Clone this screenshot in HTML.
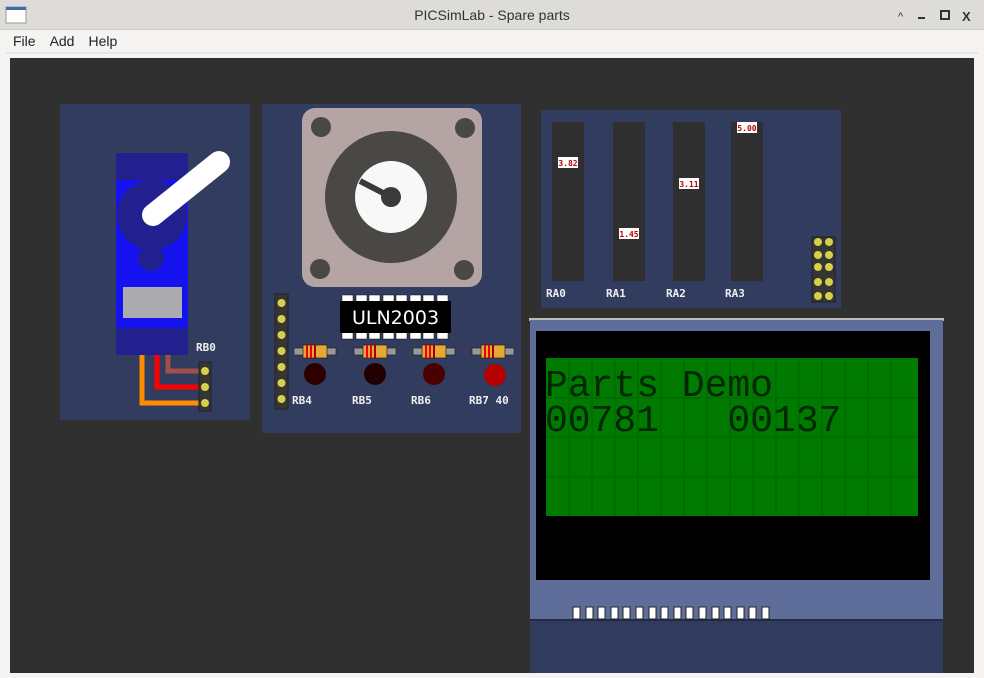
<!DOCTYPE html>
<html><head><meta charset="utf-8"><style>
body{margin:0;width:984px;height:678px;overflow:hidden;background:#f5f4f2;font-family:"Liberation Sans","DejaVu Sans",sans-serif;position:relative}
.title{position:absolute;left:0;top:0;width:984px;height:29px;background:#dedcd8;border-bottom:1px solid #d0cec9}
.title .t{position:absolute;left:0;width:984px;top:7px;text-align:center;font-size:14px;color:#333}
.menu{position:absolute;top:33px;left:13px;font-size:14px;color:#222}
.menu span{margin-right:14px}
svg{position:absolute;left:0;top:0}
svg text{white-space:pre}
</style></head><body>
<div class="title"><div class="t">PICSimLab - Spare parts</div></div>
<div class="menu"><span>File</span><span>Add</span><span>Help</span></div>
<svg width="984" height="678" viewBox="0 0 984 678" font-family="DejaVu Sans Mono, Liberation Mono, monospace">
<rect x="6" y="7" width="20" height="16" fill="#fff" stroke="#999"/><rect x="6" y="7" width="20" height="3" fill="#3a6ab0"/>
<text x="898" y="20" font-size="11" fill="#333" font-family="Liberation Sans">^</text>
<rect x="918" y="17" width="7" height="2" fill="#333"/>
<rect x="941" y="11" width="8" height="8" fill="none" stroke="#333" stroke-width="2"/>
<text x="962" y="21" font-size="13" font-weight="bold" fill="#333" font-family="Liberation Sans">X</text>
<line x1="6" y1="53" x2="978" y2="53" stroke="#dcdad6"/>
<rect x="10" y="58" width="964" height="615" fill="#303030"/>
<rect x="60" y="104" width="190" height="316" fill="#313c5f"/>
<rect x="116" y="153" width="72" height="202" fill="#22208f"/>
<rect x="116" y="180" width="72" height="148" fill="#1412ee"/>
<circle cx="152" cy="215" r="35" fill="#22208f"/>
<circle cx="151" cy="258" r="13" fill="#22208f"/>
<rect x="123" y="287" width="59" height="31" fill="#acabb0"/>
<line x1="153" y1="215" x2="219" y2="162" stroke="#fff" stroke-width="22" stroke-linecap="round"/>
<polyline points="142,355 142,403 199,403" fill="none" stroke="#ff8c00" stroke-width="5"/>
<polyline points="157,355 157,387 199,387" fill="none" stroke="#ff0000" stroke-width="5"/>
<polyline points="168,355 168,371 199,371" fill="none" stroke="#a0504a" stroke-width="5"/>
<rect x="199" y="362" width="12" height="49" fill="#353535" stroke="#222"/>
<circle cx="205" cy="371" r="4" fill="#d6d04a"/><circle cx="205" cy="387" r="4" fill="#d6d04a"/><circle cx="205" cy="403" r="4" fill="#d6d04a"/>
<text x="196" y="351" font-size="11" font-weight="bold" fill="#eee">RB0</text>
<rect x="262" y="104" width="259" height="329" fill="#313c5f"/>
<rect x="302" y="108" width="180" height="179" rx="13" fill="#b4a4a3"/>
<circle cx="321" cy="127" r="10" fill="#4a4845"/><circle cx="465" cy="128" r="10" fill="#4a4845"/>
<circle cx="320" cy="269" r="10" fill="#4a4845"/><circle cx="464" cy="270" r="10" fill="#4a4845"/>
<circle cx="391" cy="197" r="66" fill="#4a4845"/>
<circle cx="391" cy="197" r="36" fill="#f8f8f8"/>
<line x1="360" y1="181" x2="391" y2="197" stroke="#3a3a3a" stroke-width="6"/>
<circle cx="391" cy="197" r="10" fill="#3a3a3a"/>
<g fill="#fff" stroke="#111" stroke-width="0.5">
<rect x="342" y="295" width="11" height="7"/><rect x="356" y="295" width="11" height="7"/><rect x="369" y="295" width="11" height="7"/><rect x="383" y="295" width="11" height="7"/><rect x="396" y="295" width="11" height="7"/><rect x="410" y="295" width="11" height="7"/><rect x="423" y="295" width="11" height="7"/><rect x="437" y="295" width="11" height="7"/>
<rect x="342" y="332" width="11" height="7"/><rect x="356" y="332" width="11" height="7"/><rect x="369" y="332" width="11" height="7"/><rect x="383" y="332" width="11" height="7"/><rect x="396" y="332" width="11" height="7"/><rect x="410" y="332" width="11" height="7"/><rect x="423" y="332" width="11" height="7"/><rect x="437" y="332" width="11" height="7"/>
</g>
<rect x="340" y="301" width="111" height="32" fill="#000"/>
<text x="395.5" y="324" font-size="19" fill="#fff" text-anchor="middle" font-family="DejaVu Sans, Liberation Sans">ULN2003</text>
<rect x="275" y="294" width="13" height="115" fill="#353535" stroke="#222"/>
<g fill="#d6d04a"><circle cx="281.5" cy="303" r="4"/><circle cx="281.5" cy="319" r="4"/><circle cx="281.5" cy="335" r="4"/><circle cx="281.5" cy="351" r="4"/><circle cx="281.5" cy="367" r="4"/><circle cx="281.5" cy="383" r="4"/><circle cx="281.5" cy="399" r="4"/></g>
<g id="r">
<rect x="294" y="348" width="42" height="7" fill="#999" stroke="#222" stroke-width="0.7"/>
<rect x="303" y="345" width="24" height="13" fill="#e8a733" stroke="#222" stroke-width="0.7"/>
<rect x="306" y="345" width="2" height="13" fill="#e00"/><rect x="310" y="345" width="2" height="13" fill="#e00"/><rect x="314" y="345" width="2" height="13" fill="#900"/>
</g>
<use href="#r" x="60"/><use href="#r" x="119"/><use href="#r" x="178"/>
<circle cx="315" cy="374" r="11" fill="#2d0000"/><circle cx="375" cy="374" r="11" fill="#200000"/><circle cx="434" cy="374" r="11" fill="#4a0000"/><circle cx="495" cy="375" r="11" fill="#b30000"/>
<g font-size="11" font-weight="bold" fill="#eee"><text x="292" y="404">RB4</text><text x="352" y="404">RB5</text><text x="411" y="404">RB6</text><text x="469" y="404">RB7 40</text></g>
<rect x="541" y="110" width="300" height="198" fill="#313c5f"/>
<g fill="#2f2f2f"><rect x="552" y="122" width="32" height="159"/><rect x="613" y="122" width="32" height="159"/><rect x="673" y="122" width="32" height="159"/><rect x="731" y="122" width="32" height="159"/></g>
<g fill="#fff"><rect x="558" y="157" width="20" height="11"/><rect x="619" y="228" width="20" height="11"/><rect x="679" y="178" width="20" height="11"/><rect x="737" y="122" width="20" height="11"/></g>
<g font-size="8" fill="#b00" text-anchor="middle" font-weight="bold"><text x="568" y="166">3.82</text><text x="629" y="237">1.45</text><text x="689" y="187">3.11</text><text x="747" y="131">5.00</text></g>
<g font-size="11" font-weight="bold" fill="#eee"><text x="546" y="297">RA0</text><text x="606" y="297">RA1</text><text x="666" y="297">RA2</text><text x="725" y="297">RA3</text></g>
<rect x="812" y="237" width="23" height="65" fill="#353535" stroke="#222"/>
<g fill="#d6d04a"><circle cx="818" cy="242" r="4"/><circle cx="829" cy="242" r="4"/><circle cx="818" cy="255" r="4"/><circle cx="829" cy="255" r="4"/><circle cx="818" cy="267" r="4"/><circle cx="829" cy="267" r="4"/><circle cx="818" cy="282" r="4"/><circle cx="829" cy="282" r="4"/><circle cx="818" cy="296" r="4"/><circle cx="829" cy="296" r="4"/></g>
<rect x="529" y="318" width="415" height="3" fill="#bbb"/>
<rect x="530" y="320" width="413" height="300" fill="#5e6d99"/>
<rect x="530" y="620" width="413" height="53" fill="#313b5e"/>
<line x1="530" y1="620" x2="943" y2="620" stroke="#222a44" stroke-width="2"/>
<rect x="536" y="331" width="394" height="249" fill="#000"/>
<rect x="546" y="358" width="372" height="158" fill="#007a00"/>
<g stroke="#006e00" stroke-width="2" fill="none">
<path d="M569 358V516M592 358V516M615 358V516M638 358V516M661 358V516M684 358V516M707 358V516M730 358V516M753 358V516M776 358V516M799 358V516M822 358V516M845 358V516M868 358V516M891 358V516M546 398H918M546 437H918M546 477H918"/>
</g>
<g font-family="Liberation Mono, monospace" font-size="38" fill="#002800"><text x="545" y="396" xml:space="preserve">Parts Demo</text><text x="545" y="431" xml:space="preserve">00781   00137</text></g>
<g fill="#fff" stroke="#222" stroke-width="1">
<rect x="573" y="607" width="7" height="12"/><rect x="586" y="607" width="7" height="12"/><rect x="598" y="607" width="7" height="12"/><rect x="611" y="607" width="7" height="12"/><rect x="623" y="607" width="7" height="12"/><rect x="636" y="607" width="7" height="12"/><rect x="649" y="607" width="7" height="12"/><rect x="661" y="607" width="7" height="12"/><rect x="674" y="607" width="7" height="12"/><rect x="686" y="607" width="7" height="12"/><rect x="699" y="607" width="7" height="12"/><rect x="712" y="607" width="7" height="12"/><rect x="724" y="607" width="7" height="12"/><rect x="737" y="607" width="7" height="12"/><rect x="749" y="607" width="7" height="12"/><rect x="762" y="607" width="7" height="12"/>
</g>
<rect x="0" y="673" width="984" height="5" fill="#f5f4f2"/>
</svg>
</body></html>
